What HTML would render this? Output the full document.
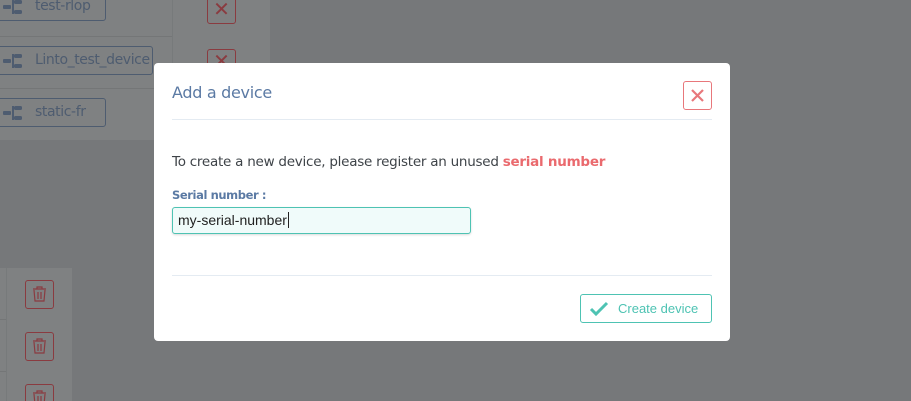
<!DOCTYPE html>
<html><head><style>
*{box-sizing:border-box;margin:0;padding:0}
html,body{width:911px;height:401px;overflow:hidden}
body{background:#76787a;font-family:"Liberation Sans",sans-serif;position:relative}
.card{position:absolute;background:#7f8182;}
.row{position:absolute;left:0;width:172px;height:1px;background:#747677}
.tag{position:absolute;height:29px;border:1px solid #4e5c70;border-radius:3px;color:#4e5c70;font-size:14px;line-height:27px;padding-left:38px;background:#7f8182;font-family:"DejaVu Sans",sans-serif;letter-spacing:-0.4px;white-space:nowrap}
.tag i{position:absolute;left:6px;top:6px;width:22px;height:14px}
.xb{position:absolute;width:29px;height:27px;border:1px solid #8a3b40;border-radius:3px;color:#8a3b40;font-size:20px;text-align:center;line-height:25px}
.tb{position:absolute;left:25px;width:29px;height:29px;border:1px solid #8a3b40;border-radius:3px}
.modal{position:absolute;left:154px;top:63px;width:576px;height:278px;background:#fff;border-radius:4px}
</style></head><body>
<div class="card" style="left:0;top:0;width:270px;height:140px"></div>
<div style="position:absolute;left:172px;top:0;width:1px;height:140px;background:#777a7b"></div>
<div class="row" style="top:36px"></div><div class="row" style="top:88px"></div>
<div class="tag" style="left:-4px;top:-8px;width:110px">test-rlop<i><svg width="22" height="16"><rect x="0" y="5" width="8" height="4" rx="1" fill="#4e5c70"/><rect x="9" y="0" width="2" height="14" fill="#4e5c70"/><rect x="11" y="0" width="8" height="4" rx="1.5" fill="#4e5c70"/><rect x="11" y="10" width="8" height="4" rx="1.5" fill="#4e5c70"/></svg></i></div>
<div class="tag" style="left:-4px;top:46px;width:157px">Linto_test_device<i><svg width="22" height="16"><rect x="0" y="5" width="8" height="4" rx="1" fill="#4e5c70"/><rect x="9" y="0" width="2" height="14" fill="#4e5c70"/><rect x="11" y="0" width="8" height="4" rx="1.5" fill="#4e5c70"/><rect x="11" y="10" width="8" height="4" rx="1.5" fill="#4e5c70"/></svg></i></div>
<div class="tag" style="left:-4px;top:98px;width:110px">static-fr<i><svg width="22" height="16"><rect x="0" y="5" width="8" height="4" rx="1" fill="#4e5c70"/><rect x="9" y="0" width="2" height="14" fill="#4e5c70"/><rect x="11" y="0" width="8" height="4" rx="1.5" fill="#4e5c70"/><rect x="11" y="10" width="8" height="4" rx="1.5" fill="#4e5c70"/></svg></i></div>
<div class="xb" style="left:207px;top:-3px">✕</div>
<div class="xb" style="left:207px;top:49px">✕</div>
<div class="card" style="left:0;top:268px;width:72px;height:133px"></div>
<div style="position:absolute;left:6px;top:268px;width:1px;height:133px;background:#777a7b"></div>
<div class="row" style="top:319px;width:6px"></div><div class="row" style="top:371px;width:6px"></div>
<div class="tb" style="top:280px"></div><div class="tb" style="top:332px"></div><div class="tb" style="top:384px"></div>
<svg style="position:absolute;left:31px;top:286px" width="18" height="115"><g fill="none" stroke="#8a3b40" stroke-width="1.2"><g><path d="M2 3h13M6 3V1h5v2M3 4l1 11h9l1-11M7 6v7M10 6v7"/></g><g transform="translate(0,52)"><path d="M2 3h13M6 3V1h5v2M3 4l1 11h9l1-11M7 6v7M10 6v7"/></g><g transform="translate(0,104)"><path d="M2 3h13M6 3V1h5v2M3 4l1 11h9l1-11M7 6v7M10 6v7"/></g></g></svg>
<div class="modal">
<div style="position:absolute;left:18px;top:20px;font-size:16px;color:#5b7aa4;font-family:'DejaVu Sans',sans-serif;letter-spacing:-0.3px">Add a device</div>
<div style="position:absolute;left:529px;top:18px;width:29px;height:29px;border:1px solid #e8777b;border-radius:3px"><svg width="27" height="27"><path d="M8 8l11 11M19 8L8 19" stroke="#e8777b" stroke-width="2.2"/></svg></div>
<div style="position:absolute;left:18px;top:56px;width:540px;height:1px;background:#e4ebf2"></div>
<div style="position:absolute;left:18px;top:91px;font-size:13.5px;color:#3e4348;font-family:'DejaVu Sans',sans-serif;letter-spacing:-0.25px">To create a new device, please register an unused <b style="color:#ea6a6e;font-weight:bold">serial number</b></div>
<div style="position:absolute;left:18px;top:125px;font-size:11.5px;color:#5b7aa4;font-weight:bold;font-family:'DejaVu Sans',sans-serif;letter-spacing:-0.4px">Serial number :</div>
<div style="position:absolute;left:18px;top:144px;width:299px;height:27px;border:1px solid #4ec3b3;border-radius:3px;background:#f0fbfa;box-shadow:0 1px 2px rgba(0,0,0,.15);font-size:14px;line-height:25px;padding-left:5px;color:#222">my-serial-number<span style="border-left:1px solid #222;margin-left:1px"></span></div>
<div style="position:absolute;left:18px;top:212px;width:540px;height:1px;background:#e4ebf2"></div>
<div style="position:absolute;left:426px;top:231px;width:132px;height:29px;border:1px solid #4ec3b3;border-radius:3px;color:#4ec3b3;font-size:13px;line-height:27px;padding-left:37px">Create device<svg style="position:absolute;left:8px;top:6px" width="20" height="16"><path d="M2 8l5 5L18 2" fill="none" stroke="#4ec3b3" stroke-width="3"/></svg></div>
</div>
</body></html>
